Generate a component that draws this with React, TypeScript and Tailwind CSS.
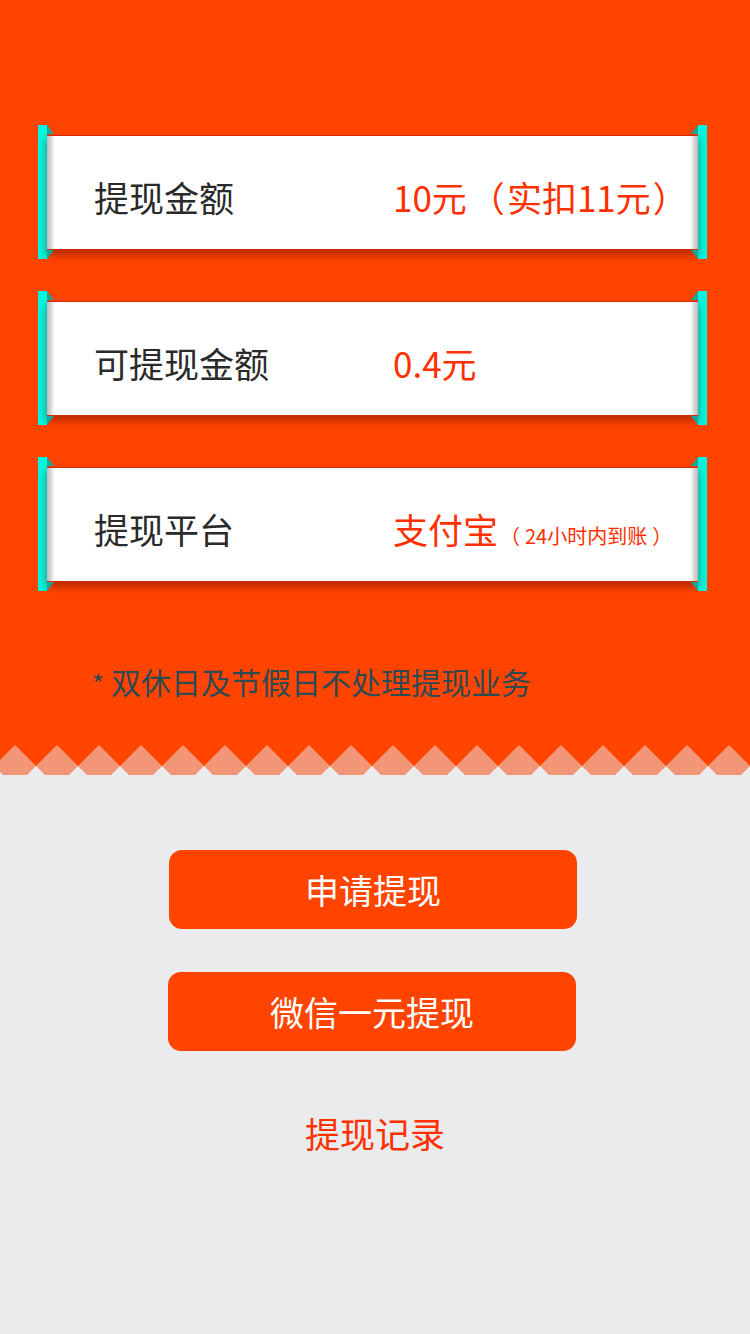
const font = { fontFamily: '"Noto Sans CJK SC", "Noto Sans", sans-serif' };

function Fold({ side }: { side: 'left' | 'right' }) {
  // small teal folds where the bar meets the card
  const top = side === 'left' ? 'M0 0 L7 9 L0 9 Z' : 'M7 0 L0 9 L7 9 Z';
  const bottom = side === 'left' ? 'M0 0 L7 0 L0 9 Z' : 'M0 0 L7 0 L7 9 Z';
  return (
    <div className="flex h-[134px] w-[7px] flex-col justify-between">
      <svg width="7" height="9" viewBox="0 0 7 9">
        <path d={top} fill="#13a99a" />
      </svg>
      <svg width="7" height="9" viewBox="0 0 7 9">
        <path d={bottom} fill="#13a99a" />
      </svg>
    </div>
  );
}

function Scroll({ label, children }: { label: string; children: React.ReactNode }) {
  return (
    <div className="ml-[38px] flex h-[134px] w-[669px] items-stretch">
      <div className="w-[9px] bg-[#00f6e0]" />
      <div className="relative flex min-w-0 flex-1 items-center">
        <div className="flex h-[115px] w-full items-center border-y border-[#d42a00] bg-white shadow-[0_5px_8px_rgba(120,20,0,0.55)]">
          <div className="h-full w-[8px] shrink-0 bg-gradient-to-r from-[#b9b9b9] to-white" />
          <div className="w-[338px] shrink-0 pl-[39px] pt-[10px] text-[35px] text-[#2a2a2a]">{label}</div>
          <div className="min-w-0 flex-1 whitespace-nowrap pt-[10px] text-[35px] text-[#ff3000]">{children}</div>
          <div className="h-full w-[8px] shrink-0 bg-gradient-to-l from-[#b9b9b9] to-white" />
        </div>
        <div className="absolute left-0 top-0 flex h-full w-full justify-between">
          <Fold side="left" />
          <Fold side="right" />
        </div>
      </div>
      <div className="w-[9px] bg-[#00f6e0]" />
    </div>
  );
}

function Zigzag() {
  const peaks = Array.from({ length: 19 }, (_, i) => 15 + i * 42);
  return (
    <svg width="750" height="30" viewBox="0 0 750 30" className="block">
      <rect x="0" y="0" width="750" height="30" fill="#ff4400" />
      <rect x="0" y="21" width="750" height="9" fill="#e9ebed" />
      {peaks.map((x) => (
        <path key={x} d={`M${x} 0 L${x + 21} 21 L${x} 42 L${x - 21} 21 Z`} fill="#f39677" />
      ))}
    </svg>
  );
}

export default function App() {
  return (
    <div className="flex min-h-[1334px] w-[750px] flex-col bg-[#e9ebed]" style={font}>
      <div className="flex flex-col gap-[32px] bg-[#ff4400] pt-[125px]">
        <Scroll label="提现金额">
          10元<span className="ml-[3px] mr-[2px]">（</span>实扣11元<span className="ml-[2px]">）</span>
        </Scroll>
        <Scroll label="可提现金额">0.4元</Scroll>
        <Scroll label="提现平台">
          支付宝
          <span className="ml-[2px] text-[20px]">
            <span className="mr-[5px]">（</span>24小时内到账<span className="ml-[5px]">）</span>
          </span>
        </Scroll>
        <div className="h-[122px] pl-[92px] pt-[36px] text-[30px] leading-[44px] text-[#2d4a52]">
          <span className="text-[26px]">*</span> 双休日及节假日不处理提现业务
        </div>
      </div>
      <Zigzag />
      <div className="flex flex-col pt-[75px]">
        <button className="ml-[169px] h-[79px] w-[408px] rounded-[13px] bg-[#ff4400] text-[34px] text-white">
          申请提现
        </button>
        <button className="ml-[168px] mt-[43px] h-[79px] w-[408px] rounded-[13px] bg-[#ff4400] text-[34px] text-white">
          微信一元提现
        </button>
        <div className="mt-[58px] self-center text-[35px] leading-[48px] text-[#ff3000]">提现记录</div>
      </div>
    </div>
  );
}
